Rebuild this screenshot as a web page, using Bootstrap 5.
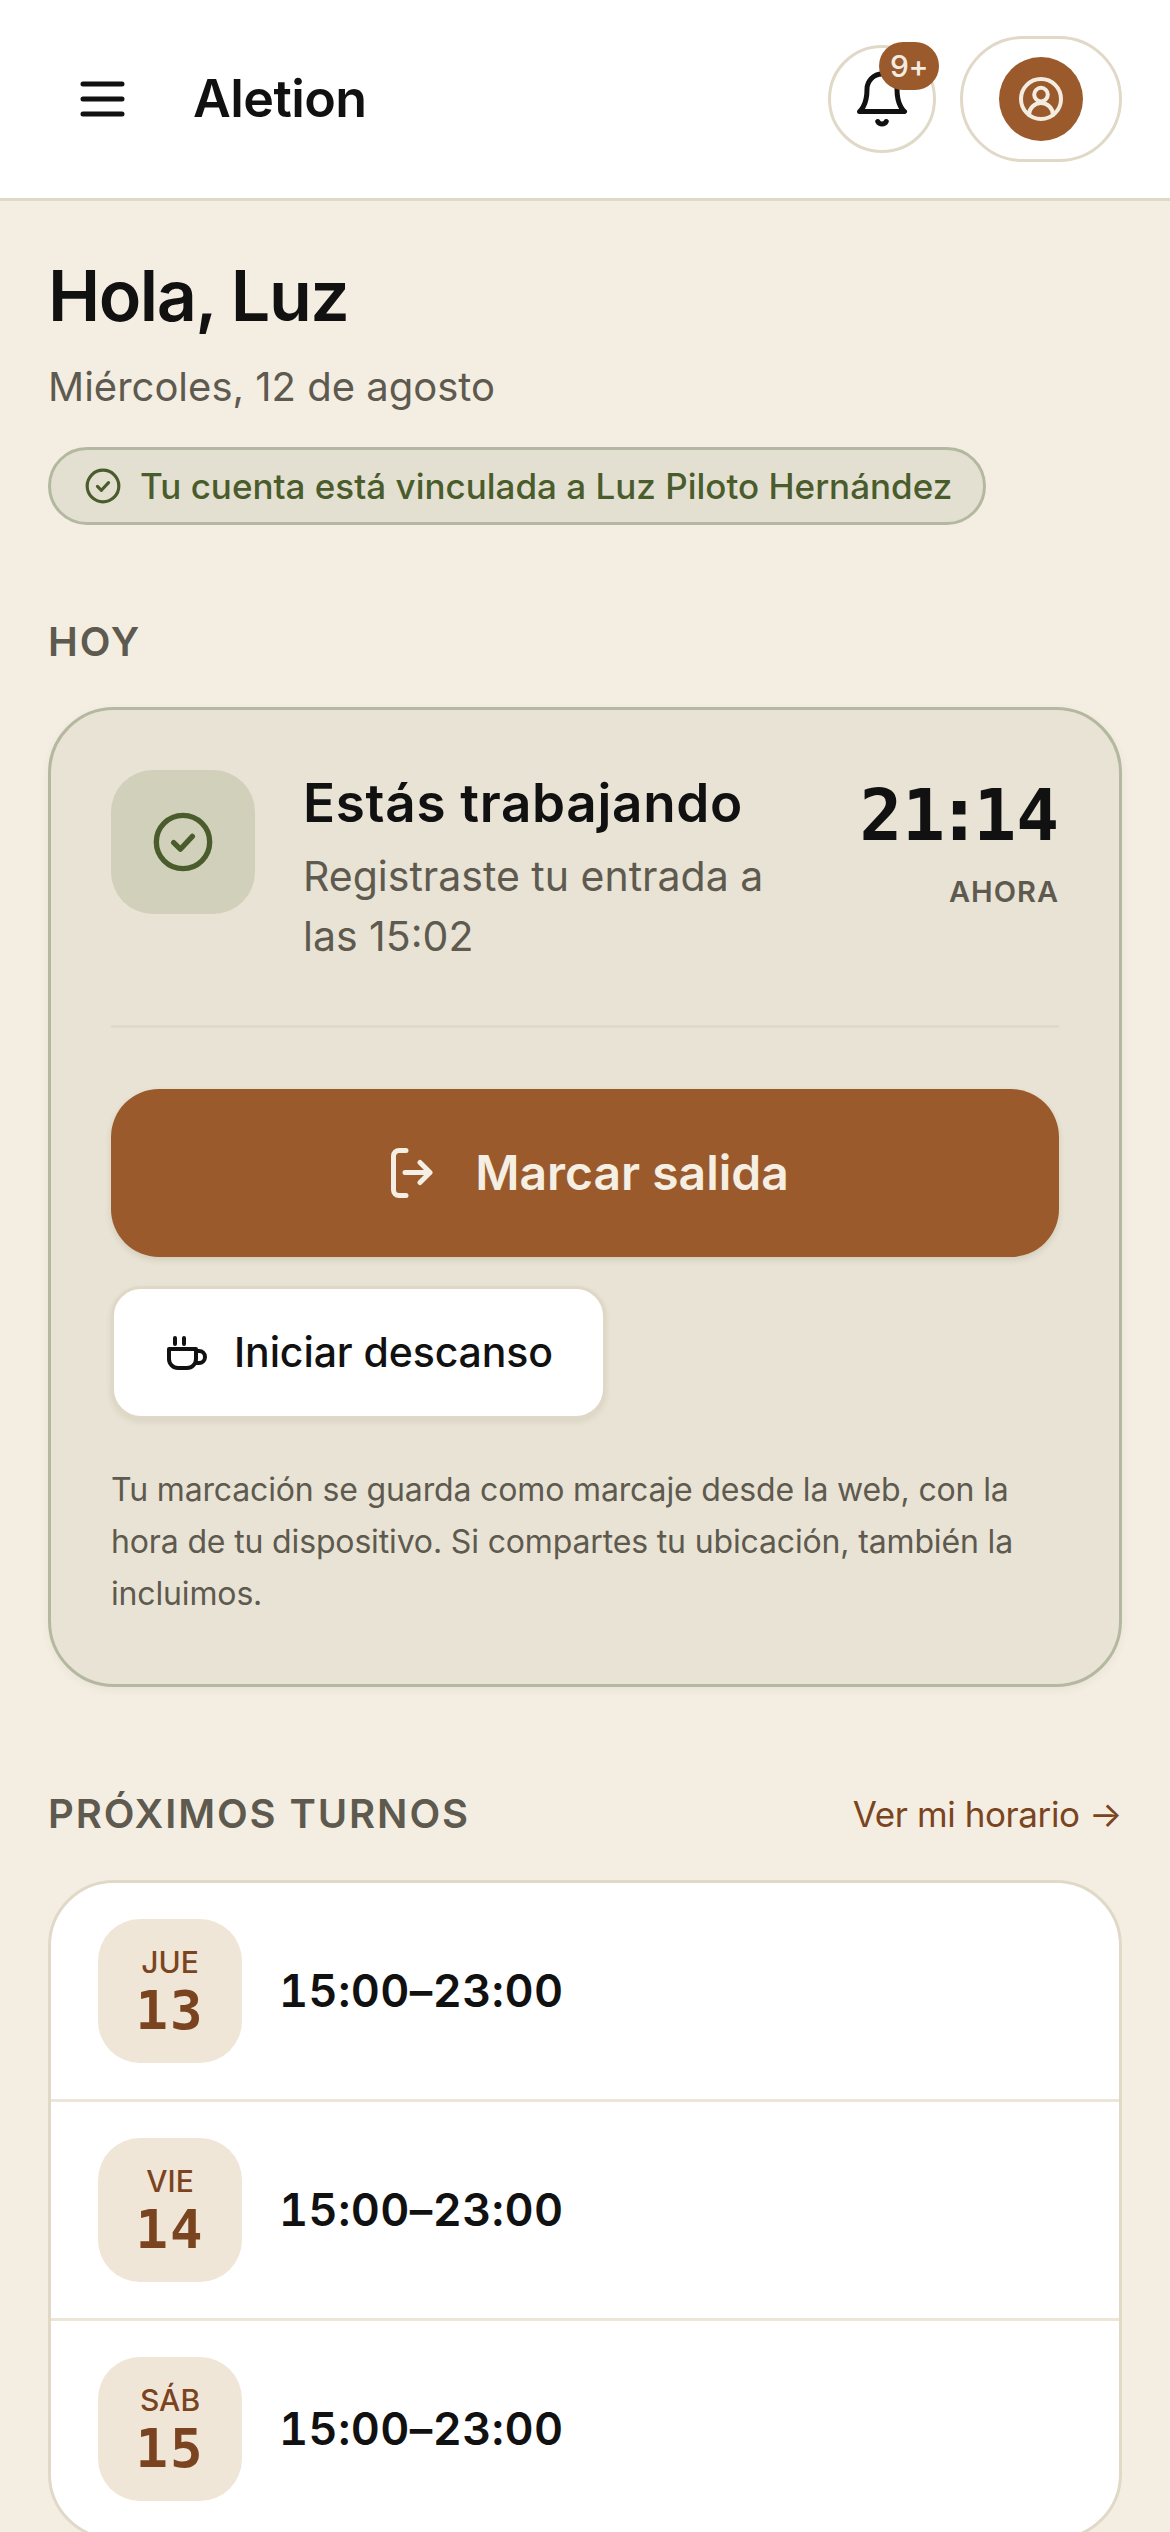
<!DOCTYPE html>
<html lang="es">
<head>
  <meta charset="UTF-8">
  <title>Aletion</title>
  <link rel="stylesheet" href="https://cdn.jsdelivr.net/npm/bootstrap@5.3.0/dist/css/bootstrap.min.css">
  <style>
    html, body { height: 2532px; overflow: hidden; }
    body { background: #f4eee2; font-family: "Inter", "Liberation Sans", sans-serif; color: #111; }
    svg { display: block; flex-shrink: 0; fill: none; stroke: currentColor; stroke-linecap: round; stroke-linejoin: round; }

    .al-top { height: 201px; background: #fff; border-bottom: 3px solid #e0d9c8; padding: 0 48px 0 80px; }
    .al-brand { font-size: 52px; font-weight: 600; letter-spacing: -.6px; margin-left: 68px; line-height: 60px; color: #111; }
    .al-bell { width: 108px; height: 108px; border: 3px solid #e0d9c8; border-radius: 50%; background: #fff; padding: 0; color: #111; margin-right: 24px; }
    .al-count { top: -6px; left: 48px; width: 60px; height: 48px; border-radius: 24px; background: #9a5a2c; color: #f3ede1; font-size: 30px; font-weight: 500; line-height: 48px; text-align: center; letter-spacing: -.5px; }
    .al-user { width: 162px; height: 126px; border: 3px solid #e0d9c8; border-radius: 63px; background: #fff; padding: 0; }
    .al-avatar { width: 84px; height: 84px; border-radius: 50%; background: #9a5a2c; color: #f3ede1; }

    .al-main { padding: 53px 48px 0; }
    .al-hello { font-size: 70px; font-weight: 600; letter-spacing: -1.5px; line-height: 84px; margin: 0 0 22px; color: #111; }
    .al-date { font-size: 40px; line-height: 54px; color: #5e5a4f; margin: 0 0 33px; }
    .al-linked { height: 78px; padding: 0 30px 0 33px; gap: 18px; border: 3px solid #b5b8a0; border-radius: 39px; background: #e3e0d1; color: #4a5c2c; font-size: 35px; font-weight: 500; width: 938px; }

    .al-head { font-size: 40px; font-weight: 600; letter-spacing: 1.9px; line-height: 48px; color: #5e5a4f; margin: 0; }
    .al-head-today { margin-top: 93px; }

    .al-today { margin-top: 41px; background: #e8e3d4; border: 3px solid #b5b8a0; border-radius: 66px; padding: 60px; box-shadow: 0 3px 9px rgba(60,50,30,.06); height: 980px; color: #111; }
    .al-state { width: 144px; height: 144px; border-radius: 42px; background: #d0d0bb; color: #4a5c2c; margin-right: 48px; flex-shrink: 0; }
    .al-title { font-size: 53px; font-weight: 600; letter-spacing: .7px; line-height: 60px; margin: 3px 0 13px; color: #111; }
    .al-sub { font-size: 41px; line-height: 60px; color: #5e5a4f; margin: 0; }
    .al-clock { font-family: "DejaVu Sans Mono", monospace; font-size: 71px; font-weight: 700; line-height: 72px; text-align: right; color: #111; margin-top: 10px; }
    .al-colon { font-family: "DejaVu Sans", sans-serif; }
    .al-now { font-size: 29px; font-weight: 600; letter-spacing: 1px; line-height: 36px; text-align: right; color: #5e5a4f; margin-top: 22px; }
    .al-rule { height: 3px; background: #dfdacb; margin: 59px 0 61px; }
    .al-out { height: 168px; border: 0; border-radius: 48px; background: #9a5a2c; color: #f5eee2; font-size: 48px; font-weight: 600; gap: 42px; padding-left: 22px; box-shadow: 0 3px 6px rgba(60,40,20,.12); }
    .al-out:hover { background: #9a5a2c; color: #f5eee2; }
    .al-rest { margin-top: 29px; width: 495px; height: 133px; border: 3px solid #dfd8c6; border-radius: 30px; background: #fff; color: #111; font-size: 41px; font-weight: 500; letter-spacing: -.1px; gap: 26px; padding: 0 0 0 52px; box-shadow: 0 3px 6px rgba(60,40,20,.08); }
    .al-rest:hover { background: #fff; color: #111; }
    .al-note { font-size: 32px; letter-spacing: -.15px; line-height: 52px; color: #5e5a4f; margin: 45px 0 0; }

    .al-next { margin-top: 103px; }
    .al-more { font-size: 35px; letter-spacing: -.4px; color: #7b4420; text-decoration: none; line-height: 48px; }
    .al-shifts { margin-top: 42px; border: 3px solid #e0d9c8; border-radius: 66px; background: #fff; overflow: hidden; }
    .al-shift { height: 219px; padding: 0 0 0 47px; gap: 37px; border-width: 0 0 3px; border-color: #ece5d8; background: #fff; }
    .al-shift:last-child { border-bottom: 0; height: 216px; }
    .al-day { width: 144px; height: 144px; border-radius: 42px; background: #f0e6d8; color: #7b4420; flex-shrink: 0; }
    .al-wd { font-size: 30px; font-weight: 500; line-height: 34px; margin-bottom: 5px; }
    .al-dn { font-family: "DejaVu Sans Mono", monospace; font-size: 54px; font-weight: 700; letter-spacing: 2px; line-height: 54px; }
    .al-hours { font-size: 45px; font-weight: 600; font-feature-settings: "tnum"; letter-spacing: .45px; color: #111; }
  </style>
</head>
<body>

  <nav class="al-top navbar flex-nowrap">
    <div class="d-flex align-items-center">
      <svg width="45" height="36" viewBox="0 0 45 36" stroke-width="5"><path d="M3 3h39M3 18h39M3 33h39"/></svg>
      <span class="al-brand">Aletion</span>
    </div>
    <div class="d-flex align-items-center">
      <button type="button" class="al-bell btn position-relative d-flex align-items-center justify-content-center">
        <svg width="60" height="60" viewBox="0 0 24 24" stroke-width="2"><path d="M6 8a6 6 0 0 1 12 0c0 7 3 9 3 9H3s3-2 3-9"/><path d="M10.3 21a1.94 1.94 0 0 0 3.4 0"/></svg>
        <span class="al-count position-absolute">9+</span>
      </button>
      <button type="button" class="al-user btn d-flex align-items-center justify-content-center">
        <span class="al-avatar d-flex align-items-center justify-content-center">
          <svg width="48" height="48" viewBox="0 0 24 24" stroke-width="2"><circle cx="12" cy="12" r="10"/><circle cx="12" cy="9.8" r="3.4"/><path d="M18 20a6 6 0 0 0-12 0"/></svg>
        </span>
      </button>
    </div>
  </nav>

  <main class="al-main">
    <h1 class="al-hello">Hola, Luz</h1>
    <p class="al-date">Miércoles, 12 de agosto</p>
    <div class="al-linked d-flex align-items-center">
      <svg width="38" height="38" viewBox="0 0 24 24" stroke-width="2"><circle cx="12" cy="12" r="10"/><path d="m8.5 12.2 2.5 2.5 4.5-4.8"/></svg>
      <span>Tu cuenta está vinculada a Luz Piloto Hernández</span>
    </div>

    <h2 class="al-head al-head-today">HOY</h2>
    <section class="al-today card">
      <div class="d-flex">
        <div class="al-state d-flex align-items-center justify-content-center">
          <svg width="64" height="64" viewBox="0 0 24 24" stroke-width="2"><circle cx="12" cy="12" r="10"/><path d="m8.5 12.2 2.5 2.5 4.5-4.8"/></svg>
        </div>
        <div class="flex-grow-1">
          <h3 class="al-title">Estás trabajando</h3>
          <p class="al-sub">Registraste tu entrada a<br>las 15:02</p>
        </div>
        <div>
          <div class="al-clock">21<span class="al-colon">:</span>14</div>
          <div class="al-now">AHORA</div>
        </div>
      </div>
      <div class="al-rule"></div>
      <button type="button" class="al-out btn w-100 d-flex align-items-center justify-content-center">
        <svg width="42" height="50" viewBox="0 0 42 50" stroke-width="5"><path d="M15 2.5H8A5.5 5.5 0 0 0 2.5 8v34A5.5 5.5 0 0 0 8 47.5h7"/><path d="M14 24.5h25M29 14.5l10 10-10 10"/></svg>
        <span>Marcar salida</span>
      </button>
      <button type="button" class="al-rest btn d-flex align-items-center">
        <svg width="42" height="36" viewBox="0 0 42 36" stroke-width="4"><path d="M9 3v6M18 3v6"/><path d="M3 14h27v10a9 9 0 0 1-9 9H12a9 9 0 0 1-9-9z"/><path d="M30 16h3a6 6 0 0 1 0 12h-3"/></svg>
        <span>Iniciar descanso</span>
      </button>
      <p class="al-note">Tu marcación se guarda como marcaje desde la web, con la<br>hora de tu dispositivo. Si compartes tu ubicación, también la<br>incluimos.</p>
    </section>

    <div class="al-next d-flex justify-content-between align-items-center">
      <h2 class="al-head">PRÓXIMOS TURNOS</h2>
      <a class="al-more" href="#">Ver mi horario →</a>
    </div>
    <div class="al-shifts list-group">
      <div class="al-shift list-group-item d-flex align-items-center">
        <div class="al-day d-flex flex-column align-items-center justify-content-center"><span class="al-wd">JUE</span><span class="al-dn">13</span></div>
        <div class="al-hours">15:00–23:00</div>
      </div>
      <div class="al-shift list-group-item d-flex align-items-center">
        <div class="al-day d-flex flex-column align-items-center justify-content-center"><span class="al-wd">VIE</span><span class="al-dn">14</span></div>
        <div class="al-hours">15:00–23:00</div>
      </div>
      <div class="al-shift list-group-item d-flex align-items-center">
        <div class="al-day d-flex flex-column align-items-center justify-content-center"><span class="al-wd">SÁB</span><span class="al-dn">15</span></div>
        <div class="al-hours">15:00–23:00</div>
      </div>
    </div>
  </main>

  <script src="https://cdn.jsdelivr.net/npm/bootstrap@5.3.0/dist/js/bootstrap.bundle.min.js"></script>
</body>
</html>
